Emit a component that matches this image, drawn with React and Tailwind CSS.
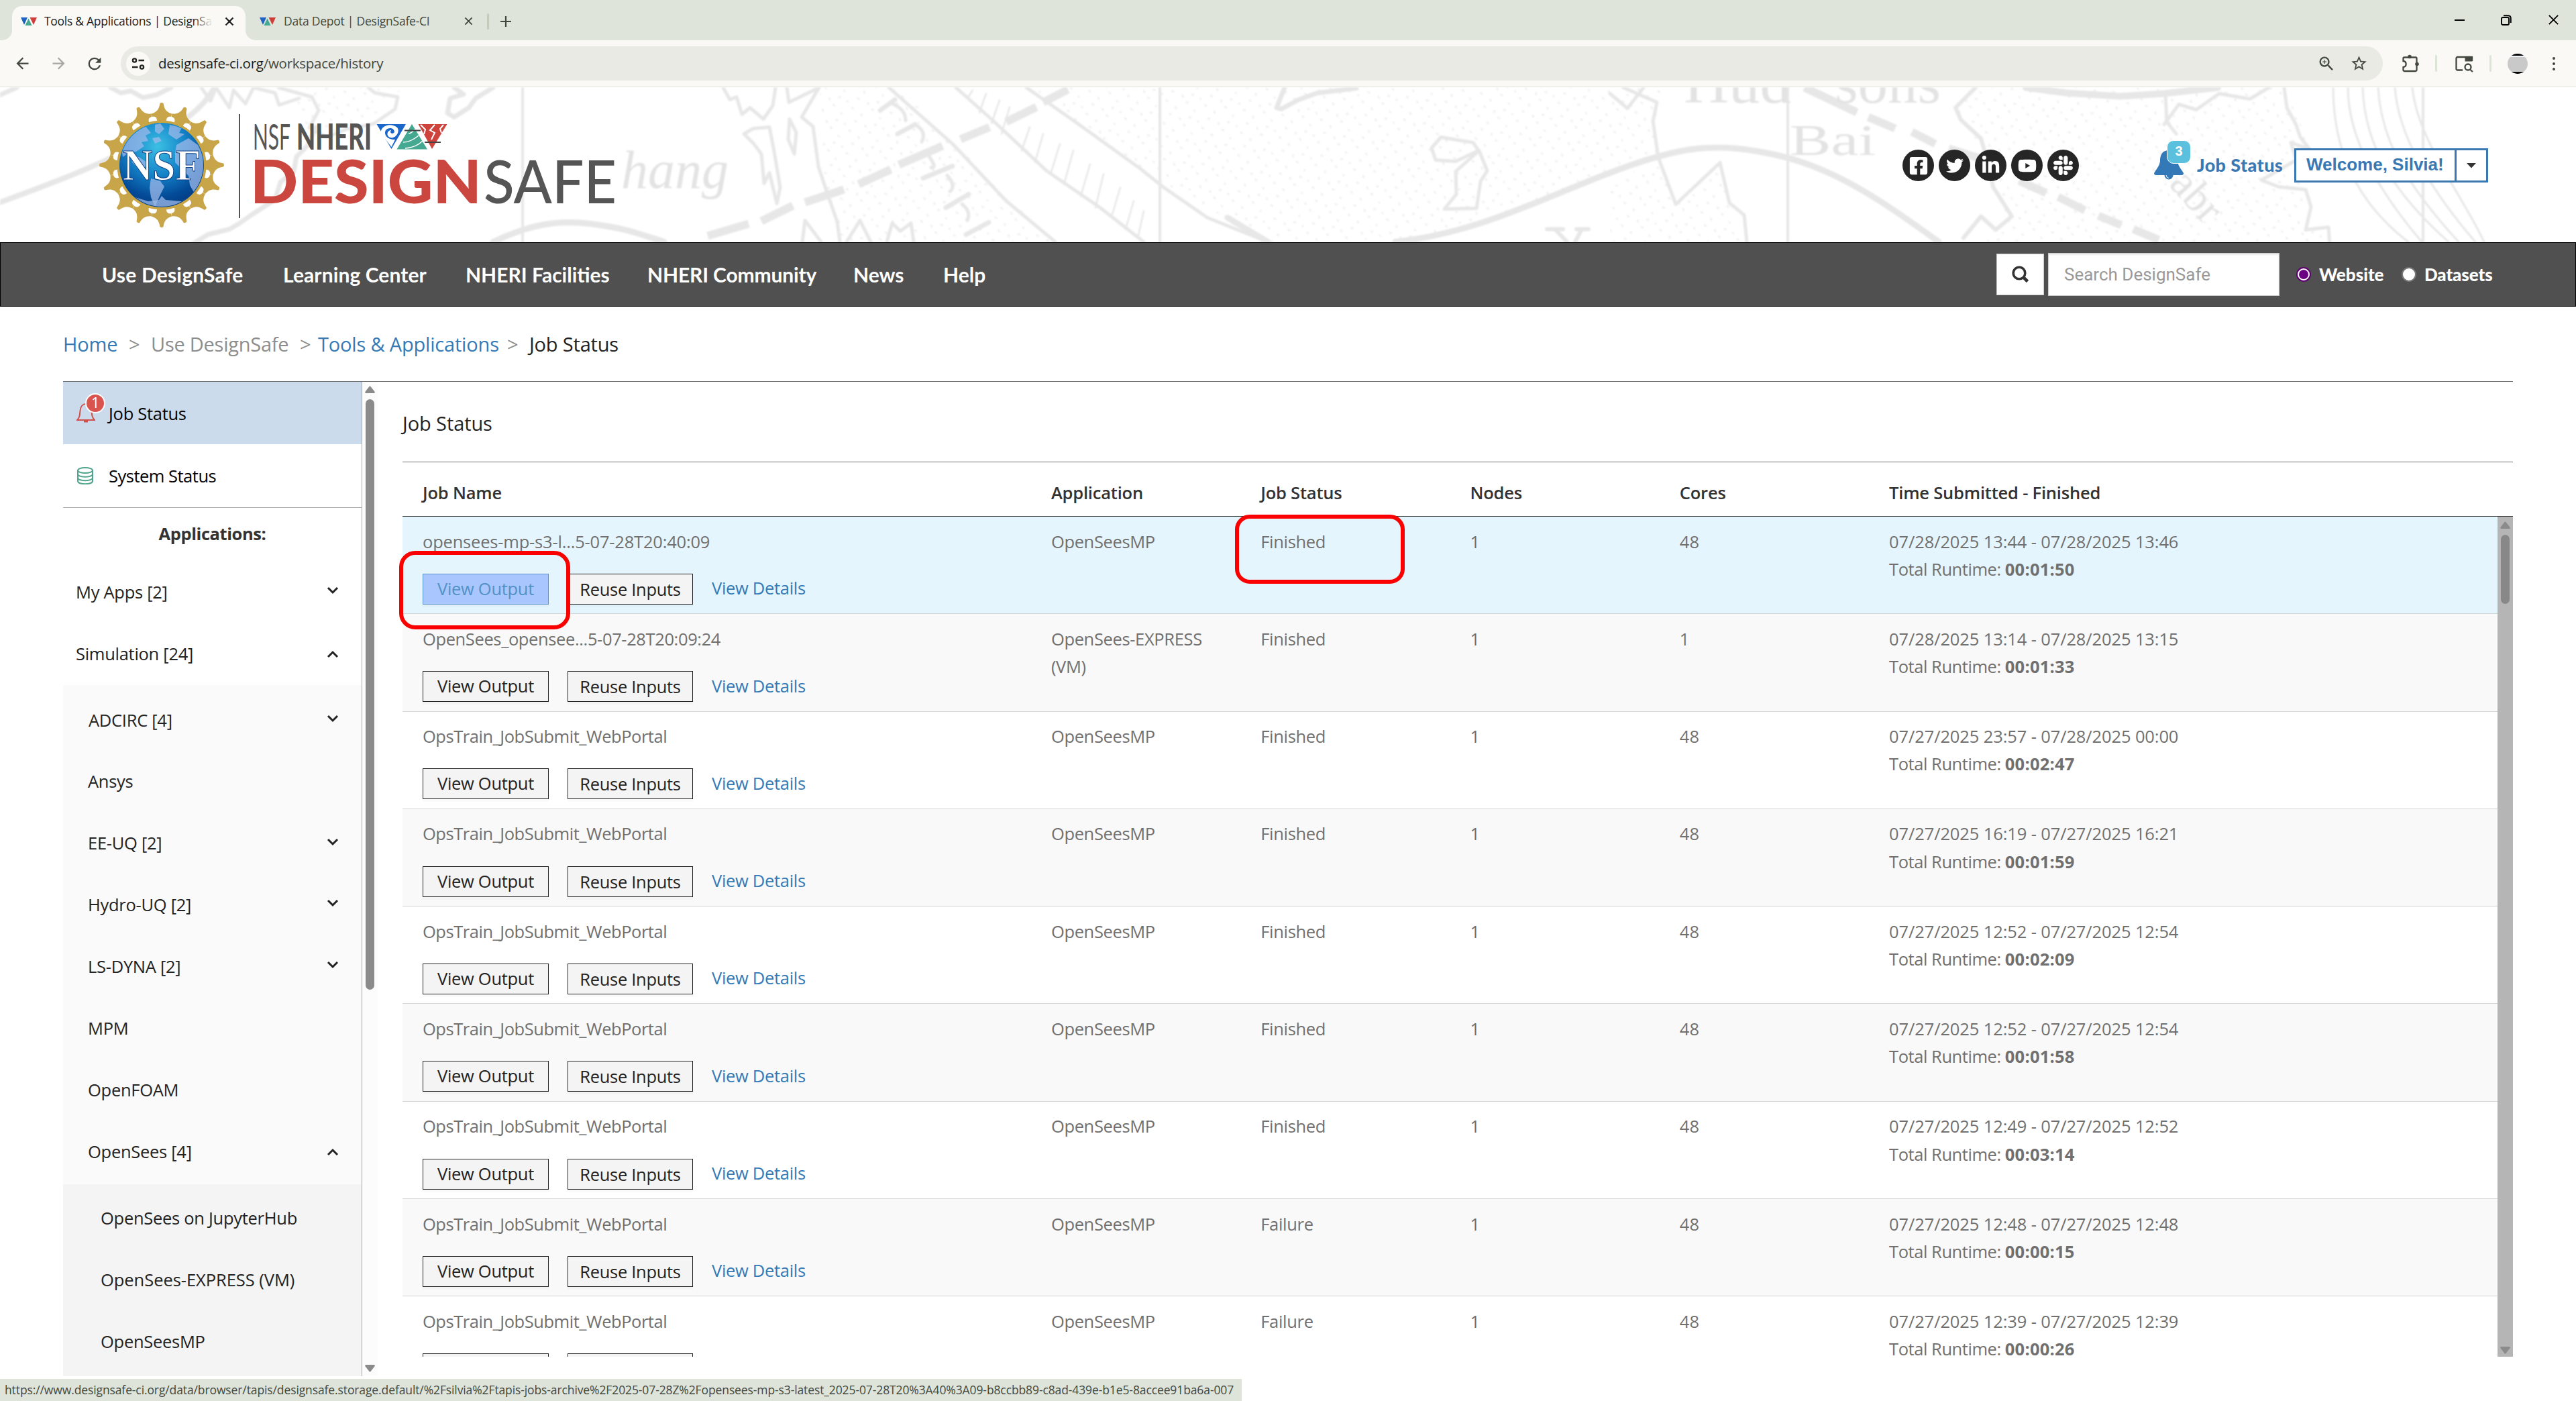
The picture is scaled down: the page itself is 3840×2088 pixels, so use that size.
import { FaFacebookSquare, FaTwitter, FaLinkedinIn, FaYoutube, FaSlack } from "react-icons/fa";
import { MdArrowBack, MdArrowForward, MdRefresh, MdStarBorder, MdZoomIn } from "react-icons/md";

const JOBS = [
  { name: "opensees-mp-s3-l...5-07-28T20:40:09", track: "tracking-[-0.2px]", app: "OpenSeesMP", status: "Finished", cores: "48", time: "07/28/2025 13:44 - 07/28/2025 13:46", run: "00:01:50", active: true },
  { name: "OpenSees_opensee...5-07-28T20:09:24", track: "tracking-[-0.38px]", app: "OpenSees-EXPRESS (VM)", status: "Finished", cores: "1", time: "07/28/2025 13:14 - 07/28/2025 13:15", run: "00:01:33" },
  { name: "OpsTrain_JobSubmit_WebPortal", app: "OpenSeesMP", status: "Finished", cores: "48", time: "07/27/2025 23:57 - 07/28/2025 00:00", run: "00:02:47" },
  { name: "OpsTrain_JobSubmit_WebPortal", app: "OpenSeesMP", status: "Finished", cores: "48", time: "07/27/2025 16:19 - 07/27/2025 16:21", run: "00:01:59" },
  { name: "OpsTrain_JobSubmit_WebPortal", app: "OpenSeesMP", status: "Finished", cores: "48", time: "07/27/2025 12:52 - 07/27/2025 12:54", run: "00:02:09" },
  { name: "OpsTrain_JobSubmit_WebPortal", app: "OpenSeesMP", status: "Finished", cores: "48", time: "07/27/2025 12:52 - 07/27/2025 12:54", run: "00:01:58" },
  { name: "OpsTrain_JobSubmit_WebPortal", app: "OpenSeesMP", status: "Finished", cores: "48", time: "07/27/2025 12:49 - 07/27/2025 12:52", run: "00:03:14" },
  { name: "OpsTrain_JobSubmit_WebPortal", app: "OpenSeesMP", status: "Failure", cores: "48", time: "07/27/2025 12:48 - 07/27/2025 12:48", run: "00:00:15" },
  { name: "OpsTrain_JobSubmit_WebPortal", app: "OpenSeesMP", status: "Failure", cores: "48", time: "07/27/2025 12:39 - 07/27/2025 12:39", run: "00:00:26" },
];

const COLUMNS = ["Job Name", "Application", "Job Status", "Nodes", "Cores", "Time Submitted - Finished"];
const NAV = [
  ["Use DesignSafe", "w-[270px] tracking-[0.2px]"],
  ["Learning Center", "w-[272px] tracking-[0.1px]"],
  ["NHERI Facilities", "w-[271px]"],
  ["NHERI Community", "w-[307px] tracking-[-0.15px]"],
  ["News", "w-[134px]"],
  ["Help", ""],
];

function Favicon() {
  return (
    <svg className="h-[12px] w-[24px] shrink-0" viewBox="0 0 24 12">
      <path d="M0 0h10L5 11z" fill="#1d62c4" />
      <path d="M11.5 1.5 16.5 12h-10z" fill="#45a891" />
      <path d="M13.5 0H24l-5 11z" fill="#cf3f3a" />
    </svg>
  );
}

function Cross({ className }) {
  return (
    <svg className={className} viewBox="0 0 14 14" fill="none" stroke="currentColor">
      <path d="M1.5 1.5 12.5 12.5M12.5 1.5 1.5 12.5" />
    </svg>
  );
}

function TabStrip() {
  return (
    <div className="flex h-[60px] items-start bg-[#dee4d9]">
      <div className="relative ml-[18px] mt-[9px] flex h-[51px] w-[348px] items-center rounded-t-[15px] bg-[#faf9f5] pb-[6px] pl-[13px]">
        <svg className="absolute -left-[15px] bottom-0 h-[15px] w-[15px]" viewBox="0 0 15 15">
          <path d="M15 0v15H0A15 15 0 0 0 15 0z" fill="#faf9f5" />
        </svg>
        <svg className="absolute -right-[15px] bottom-0 h-[15px] w-[15px]" viewBox="0 0 15 15">
          <path d="M0 0v15h15A15 15 0 0 1 0 0z" fill="#faf9f5" />
        </svg>
        <Favicon />
        <div className="relative ml-[11px] w-[251px] overflow-hidden whitespace-nowrap text-[17.5px] tracking-[-0.28px] text-[#1d1e1c]">
          Tools &amp; Applications | DesignSafe-CI
          <div className="absolute inset-y-0 right-0 w-[28px] bg-linear-to-r from-[#faf9f500] to-[#faf9f5]" />
        </div>
        <Cross className="ml-[18px] h-[14px] w-[14px] stroke-[2.2px] text-[#1d1e1c]" />
      </div>
      <div className="ml-[21px] mt-[9px] flex h-[45px] items-center">
        <Favicon />
        <div className="ml-[12px] w-[269px] whitespace-nowrap text-[17.5px] tracking-[-0.24px] text-[#43483f]">Data Depot | DesignSafe-CI</div>
        <Cross className="h-[13px] w-[13px] stroke-[2px] text-[#43483f]" />
        <div className="ml-[21px] h-[24px] w-[3px] rounded-full bg-[#c3ccbc]" />
        <svg className="ml-[17px] h-[16px] w-[16px]" viewBox="0 0 16 16" stroke="#43483f" strokeWidth="2.2">
          <path d="M8 0v16M0 8h16" />
        </svg>
      </div>
      <div className="ml-auto mr-[25px] mt-[22px] flex h-[15px] items-center gap-[54px] text-black">
        <div className="h-[2px] w-[15px] bg-black" />
        <svg className="h-[16px] w-[16px]" viewBox="0 0 16 16" fill="none" stroke="black" strokeWidth="1.9">
          <rect x="1" y="4" width="11" height="11" rx="2" />
          <path d="M4 1.2h7A4 4 0 0 1 14.8 5v7" />
        </svg>
        <Cross className="h-[17px] w-[17px] stroke-[1.5px]" />
      </div>
    </div>
  );
}

function Toolbar() {
  return (
    <div className="flex h-[70px] items-center border-b border-[#dfe1da] bg-[#faf9f5] text-[#43483f]">
      <MdArrowBack className="ml-[20px] h-[27px] w-[27px]" />
      <MdArrowForward className="ml-[27px] h-[27px] w-[27px] text-[#a6a8a1]" />
      <MdRefresh className="ml-[26px] h-[28px] w-[28px]" />
      <div className="ml-[25px] flex h-[51px] w-[3372px] items-center rounded-full bg-[#e9eae4] pl-[8px] pr-[22px]">
        <div className="flex h-[36px] w-[36px] items-center justify-center rounded-full bg-[#faf9f5]">
          <svg className="h-[18px] w-[20px]" viewBox="0 0 20 18" fill="none" stroke="#22241f" strokeWidth="2.3">
            <circle cx="4.5" cy="4" r="2.6" />
            <path d="M10.500 4H19M1 14H9.500" />
            <circle cx="15.500" cy="14" r="2.600" />
          </svg>
        </div>
        <div className="ml-[12px] whitespace-nowrap text-[20.5px] tracking-[-0.26px]">
          <span className="text-[#1b1c1a]">designsafe-ci.org</span>/workspace/history
        </div>
        <MdZoomIn className="ml-auto h-[28px] w-[28px]" />
        <MdStarBorder className="ml-[21px] h-[27px] w-[27px]" />
      </div>
      <svg className="ml-[28px] h-[28px] w-[28px]" viewBox="0 0 28 28">
        <path d="M4 4.500h17a1.500 1.500 0 0 1 1.500 1.500v17.500a1.500 1.500 0 0 1-1.500 1.500H4a1.500 1.500 0 0 1-1.500-1.500V19c5.500-.5 5.500-8.500 0-9V6A1.500 1.500 0 0 1 4 4.500z" fill="none" stroke="#43483f" strokeWidth="2.300" />
        <circle cx="12" cy="3.500" r="2.800" fill="#43483f" />
        <circle cx="23" cy="14.500" r="2.800" fill="#43483f" />
      </svg>
      <div className="ml-[22px] h-[25px] w-[3px] rounded-full bg-[#dbe5d5]" />
      <svg className="ml-[27px] h-[26px] w-[28px]" viewBox="0 0 28 26" fill="none" stroke="#43483f" strokeWidth="2.300">
        <path d="M11 22.500H3.500A2 2 0 0 1 1.500 20.500V5A2 2 0 0 1 3.500 3H25v6" />
        <path d="M14.500 2h9a2 2 0 0 1 2 2v5.500h-11z" fill="#43483f" stroke="none" />
        <circle cx="19" cy="18" r="4.500" />
        <path d="M22 21.500 26 25" />
      </svg>
      <div className="ml-[23px] h-[25px] w-[3px] rounded-full bg-[#dbe5d5]" />
      <div className="ml-[24px] flex h-[30px] w-[30px] flex-col overflow-hidden rounded-full bg-[#c9c9c9]">
        <div className="h-[3px] bg-black" />
        <div className="h-[2px] bg-[#f0f3fa]" />
        <div className="mt-auto h-[3px] bg-black" />
      </div>
      <div className="ml-[37px] flex flex-col gap-[4px]">
        <div className="h-[4px] w-[4px] rounded-full bg-[#43483f]" />
        <div className="h-[4px] w-[4px] rounded-full bg-[#43483f]" />
        <div className="h-[4px] w-[4px] rounded-full bg-[#43483f]" />
      </div>
    </div>
  );
}

function MapBackdrop() {
  return (
    <svg className="absolute inset-0 h-full w-full blur-[1px]" viewBox="0 131 3840 230" fill="none" stroke="#e7e7e7" strokeLinecap="round" strokeLinejoin="round">
      <defs>
        <pattern id="stipple" width="58" height="34" patternUnits="userSpaceOnUse" patternTransform="rotate(7)">
          <g stroke="#ececec" strokeWidth="2.400">
            <path d="M4 5l2 1M19 13l1 2M34 4l2 1M47 15l1 1M11 24l2 1M27 29l1 2M41 26l2 0M54 30l1 1" />
          </g>
        </pattern>
      </defs>
      <g fill="url(#stipple)" stroke="none">
        <path d="M430 131H600L560 180 500 200 450 190z" />
        <path d="M420 260 370 340 290 361H330L390 320z" />
        <path d="M1222 131H1340L1570 361H1255L1225 250z" />
        <path d="M1530 131H2480L2465 190 2475 235 2300 300 2150 355 1890 361 1730 270z" />
        <path d="M2400 361V270L2475 240 2500 305 2560 250 2600 361z" />
        <path d="M2945 131H3410L3440 215 3430 330 3480 361H2960L2990 320 2965 240 2915 165z" />
      </g>
      <g strokeWidth="5">
        <path d="M0 142 25 131M165 131l15 8 15-3 18 10 20-4 22-11" strokeWidth="7" />
        <path d="M0 302C60 280 100 265 134 250S190 225 230 205 300 165 320 131" strokeWidth="8" />
        <path d="M300 131l14 20 8-20 20 30 6-26 18 20 12-24 32 8 6 18 30-10M415 131l50 14 10 20-14 26 26 14 30-12 40-8 32-22 4-18-34-6-10-8" />
        <path d="M470 190l-10 26-18 18-4 22-20 16-8 26-34 22-20 14-14 8-32 8-26 16-14 18" strokeWidth="7" />
        <path d="M735 131l-26 16-10 14-22 14-10-6 4-22 20-6-14-10" strokeWidth="7" />
        <path d="M779 131V361M1729 131V361M2665 131V361M3612 131V361" strokeWidth="4" />
        <path d="M735 361C790 335 830 328 880 334S950 348 990 361" strokeWidth="9" />
        <path d="M1078 131l10 18 10-4 8 26 12-10 20 17 14-20 4-27M1173 131l3 22 45-22-26 44 17 14 8 60 12 36 16 46 4 30" />
        <path d="M1147 190l8 42 8 48-5 24-11-46-8 16-4-44-12-16-14-14 14-8z M1177 178l10 20-3 32-9-22z" />
        <path d="M1196 361l4-32 24 32M1262 361l20-32 16 32M1322 361l8-28 12 12 16-12 4 28" />
        <path d="M1325 131 1420 215 1500 300 1573 361M1425 131 1480 180 1560 255 1640 310 1705 361M1530 131 1600 180 1700 252 1735 280 1800 325 1890 361" />
        <path d="M1450 135l-8 12M1470 140l-10 28M1490 150l-12 34M1505 160l-12 40M1535 190l-12 35M1555 200l-12 42M1580 215l-14 45M1600 225l-14 50M1625 245l-14 48M1645 260l-12 50M1670 280l-12 40M1690 300l-12 42M1705 315l-8 36" strokeWidth="2.500" />
        <path d="M1312 165l22-16M1338 200l26-14M1376 266l44-18M1410 310l34-20M1440 350l34-18" strokeWidth="7" />
        <path d="M1332 156q18 8 18 24M1364 186q18 10 10 26M1384 232q14 20 4 18M1412 262q14 16 4 24M1434 305q14 10 8 24" />
        <path d="M1915 131l-12 30 7 2 26-14 28-10 58-7" strokeWidth="7" />
        <path d="M2148 205l48 8 8 12-34 16-30-2-6-18zM2205 225l12 30-10 16-6 40-48 1 18-22-1-34 18-16z" />
        <path d="M2080 361C2200 348 2290 300 2400 258S2560 212 2650 232 2820 310 2890 361M1830 325 1890 361" strokeWidth="9" />
        <path d="M2306 342h24M2318 342 2336 361M2348 361 2358 342M2350 342h18" strokeWidth="6" />
        <path d="M2400 140l26 22 24-31M2420 131l50 22-6 28 8 54 26 70 66-62 14 60 22 18 4 40" />
        <path d="M2945 131l-30 30 8 18 30 28 10 34 8 38 28 44-24 20-22-20-26 32" strokeWidth="6" />
        <path d="M3020 131l60 8 80 5 66-4 80-9" strokeWidth="10" />
        <path d="M3228 142l2 40 14 18M3226 186l22-30 26 8 34-24 46 8 28-17M3405 131l4 30 14 26 6 18 14 18-28-10 8 26-52 30 26 10 40 4 8 26-8 34 34-4 2 28 30 8" />
        <path d="M3478 131C3478 220 3510 300 3590 361M3500 131C3500 210 3550 290 3610 361M3522 131C3525 220 3570 290 3650 361M3545 131C3550 220 3600 290 3665 361M3570 131C3575 200 3620 280 3690 361M3596 131C3604 210 3670 290 3703 361" strokeWidth="3" />
      </g>
      <g strokeWidth="12" strokeLinecap="butt">
        <path d="M1055 352 1116 334M1135 330 1182 307M1200 302 1258 283M1280 275 1328 253M1340 246 1405 218M1432 208 1475 190M1500 182 1545 160M1555 153 1592 134" />
        <path d="M2690 131 2768 168M2785 175 2825 192M2850 197 2885 215M2905 222 2950 236M3010 270 3050 288M3068 294 3108 314M3128 322 3162 336M3180 342 3218 358" />
      </g>
      <g fill="#e3e3e3" stroke="none" fontFamily="Liberation Serif, serif">
        <text x="926" y="280" fontSize="80" fontStyle="italic" textLength="160" lengthAdjust="spacingAndGlyphs">hang</text>
        <text x="2510" y="153" fontSize="84" textLength="160" lengthAdjust="spacingAndGlyphs">Hud</text>
        <text x="2735" y="153" fontSize="84" textLength="158" lengthAdjust="spacingAndGlyphs">sons</text>
        <text x="2668" y="231" fontSize="66" textLength="128" lengthAdjust="spacingAndGlyphs">Bai</text>
        <text x="3232" y="276" fontSize="64" transform="rotate(48 3232 276)">abr</text>
      </g>
    </svg>
  );
}

const SPIKES = Array.from({ length: 16 }, (_, i) => i * 22.5);

function NsfSeal() {
  return (
    <svg className="h-[186px] w-[186px]" viewBox="-93 -93 186 186">
      <defs>
        <radialGradient id="globe" cx="0.45" cy="0.28" r="0.75">
          <stop offset="0" stopColor="#3cc0e4" />
          <stop offset="0.45" stopColor="#1583c8" />
          <stop offset="0.8" stopColor="#034a97" />
          <stop offset="1" stopColor="#033a80" />
        </radialGradient>
        <clipPath id="disc"><circle r="62" /></clipPath>
      </defs>
      <g fill="#c8a548">
        {SPIKES.map((a) => (
          <path key={a} transform={`rotate(${a})`} d="M-2.500-92Q0-94 2.500-92C4-83 7-79 15.200-76.500L11-60H-11L-15.200-76.500C-7-79-4-83-2.500-92z" />
        ))}
      </g>
      <g fill="#ffffff">
        {SPIKES.map((a) => (
          <path key={a} transform={`rotate(${a + 11.25})`} d="M-4-72.500Q0-74.500 4-72.500Q7-71 6-64H-6Q-7-71-4-72.500z" />
        ))}
      </g>
      <circle r="64.500" fill="none" stroke="#c9a544" strokeWidth="4" />
      <circle r="63" fill="url(#globe)" />
      <g clipPath="url(#disc)" fill="#9db9ea" fillOpacity="0.75">
        <path d="M-52-36-38-52-24-58-16-48-24-44-20-36-30-34-26-28-38-20-50-18-58-12-60-24zM-10-60-2-62 4-54-4-46-10-50zM-14-40-4-42 0-36-10-32zM12-60 30-56 26-48 34-46 22-38 10-46z" />
        <path d="M22-30 40-40 54-30 62-14 62 40 50 44 42 30 40 16 30 6 20-4 20-18zM-46-16-34-12-22-4-26 6-36 4-44-4zM-16 20-2 24 4 32-2 44-10 62-16 48-18 34z" />
        <path d="M-40 48-20 54-4 52 0 46 6 52 30 54 44 46 30 64H-30z" />
      </g>
      <text x="-58" y="22" textLength="116" lengthAdjust="spacingAndGlyphs" fontFamily="Liberation Serif, serif" fontWeight="700" fontSize="66" fill="#ffffff" stroke="#0c3f86" strokeWidth="1">NSF</text>
    </svg>
  );
}

function Wordmark() {
  return (
    <svg className="h-[156px] w-[560px]" viewBox="370 170 560 156" fontFamily="Lato, sans-serif" fill="#555555">
      <text x="377" y="223" fontSize="53" fontWeight="400" textLength="56" lengthAdjust="spacingAndGlyphs">NSF</text>
      <text x="442" y="223" fontSize="53" fontWeight="900" textLength="112" lengthAdjust="spacingAndGlyphs">NHERI</text>
      <text x="373" y="302.500" fontSize="89" fontWeight="900" fill="#ca463f" textLength="345" lengthAdjust="spacingAndGlyphs">DESIGN</text>
      <text x="721" y="302.500" fontSize="89" fontWeight="500" textLength="198" lengthAdjust="spacingAndGlyphs">SAFE</text>
      <path d="M561.500 185H605L583.500 222z" fill="#1b66cb" />
      <path d="M568 199C566 188 582 182 592 190C597 196 590 207 582 205C575 203 577 194 583 194C580 198 585 201 588 197C588 190 579 189 575 194C572 200 576 208 589 208L583.500 219z" fill="#ffffff" />
      <path d="M614 185 637 222.500H591.500z" fill="#45a891" />
      <path d="M601 212Q612 212 624 202M604 221Q620 220 630 210M609 199Q613 199 618 193" stroke="#ffffff" strokeWidth="1.500" fill="none" />
      <path d="M623.500 185H666.500L644 222z" fill="#cf433d" />
      <path d="M627 186 634 193 632 200M661 186 656 192 658 198M648 186 641 194 648 198 643 208" stroke="#ffffff" strokeWidth="2" fill="none" />
      <path d="M603 194.500H627M633 212H657" stroke="#444444" strokeWidth="2" />
    </svg>
  );
}

function Social({ children }) {
  return <div className="flex h-[47px] w-[47px] items-center justify-center rounded-full bg-[#262626] text-white">{children}</div>;
}

function Banner() {
  return (
    <header className="relative h-[231px] overflow-hidden bg-white">
      <MapBackdrop />
      <div className="relative flex h-full items-center">
        <div className="ml-[148px]"><NsfSeal /></div>
        <div className="ml-[22px] mt-[3px] h-[155px] w-[2px] bg-[#555555]" />
        <div className="ml-[12px] mt-[5px]"><Wordmark /></div>
        <div className="ml-auto mt-[2px] flex gap-[7px]">
          <Social><FaFacebookSquare className="h-[30px] w-[30px]" /></Social>
          <Social><FaTwitter className="h-[26px] w-[26px]" /></Social>
          <Social><FaLinkedinIn className="h-[29px] w-[29px]" /></Social>
          <Social><FaYoutube className="h-[28px] w-[28px]" /></Social>
          <Social><FaSlack className="h-[33px] w-[33px]" /></Social>
        </div>
        <div className="relative ml-[112px]">
          <svg className="h-[44px] w-[44px]" viewBox="0 0 44 44">
            <path d="M22 0C11 0 9 9 9 16 8 24 4 27 0 34 0 36 1 37 3 37H41C43 37 44 36 44 34 40 27 36 24 35 16 35 9 33 0 22 0z" fill="#3379b7" />
            <circle cx="22" cy="37" r="6.500" fill="#3379b7" />
            <path d="M18 37Q18.500 41 22 41.500" stroke="#ffffff" strokeWidth="1" fill="none" />
          </svg>
          <div className="absolute -top-[15px] left-[19px] flex h-[35px] w-[36px] items-center justify-center rounded-[10px] border border-white bg-[#5bc0de] pb-[3px] font-['Liberation_Sans',sans-serif] text-[20px] font-bold text-white">3</div>
        </div>
        <div className="ml-[20px] w-[145px] whitespace-nowrap font-['Lato',sans-serif] text-[27px] font-black leading-none tracking-[0.4px] text-[#3a78b3]">Job Status</div>
        <div className="mr-[131px] mt-[2px] flex h-[51px] w-[289px] border-[3px] border-[#3a78b3] bg-white font-['Liberation_Sans',sans-serif]">
          <div className="flex flex-1 items-center whitespace-nowrap pl-[15px] pb-[3px] text-[26px] font-bold text-[#3a78b3]">Welcome, Silvia!</div>
          <div className="flex w-[47px] items-center justify-center border-l-[3px] border-[#3a78b3]">
            <svg className="h-[8px] w-[14px]" viewBox="0 0 14 8"><path d="M0 0h14L7 7.500z" fill="#333333" /></svg>
          </div>
        </div>
      </div>
    </header>
  );
}

function NavBar() {
  return (
    <nav className="flex h-[96px] items-center border border-black bg-[#505050] pl-[151px] pr-[122px] font-['Lato',sans-serif] font-bold text-white">
      <div className="flex text-[30px]">
        {NAV.map(([label, size]) => <span key={label} className={`whitespace-nowrap ${size}`}>{label}</span>)}
      </div>
      <div className="ml-auto flex items-center">
        <div className="flex h-[62px] w-[71px] items-center justify-center border border-[#cccccc] bg-white">
          <svg className="h-[26px] w-[26px]" viewBox="0 0 26 26" fill="none" stroke="#333333">
            <circle cx="11" cy="11" r="8.800" strokeWidth="3.600" />
            <path d="M17 17 23.500 23.500" strokeWidth="4.600" />
          </svg>
        </div>
        <div className="ml-[6px] flex h-[64px] w-[345px] items-center border border-[#cccccc] bg-white pl-[23px] font-['Roboto',sans-serif] text-[26px] font-normal text-[#999999] shadow-[inset_0_2px_2px_rgba(0,0,0,0.08)]">Search DesignSafe</div>
        <div className="ml-[25px] flex h-[22px] w-[22px] items-center justify-center rounded-full border-[2px] border-[#5d0070] bg-white"><div className="h-[14px] w-[14px] rounded-full bg-[#6a0082]" /></div>
        <div className="ml-[12px] w-[123px] text-[26px] font-black">Website</div>
        <div className="h-[22px] w-[22px] rounded-full border-[2px] border-[#767676] bg-white" />
        <div className="ml-[12px] w-[103px] whitespace-nowrap text-[26px] font-black tracking-[-0.1px]">Datasets</div>
      </div>
    </nav>
  );
}

function Chevron({ up }) {
  return (
    <svg className={up ? "h-[12px] w-[18px]" : "-mt-[6px] h-[12px] w-[18px]"} viewBox="0 0 18 12" fill="none" stroke="#222222" strokeWidth="3">
      <path d={up ? "M2 10 9 3 16 10" : "M2 2 9 9 16 2"} />
    </svg>
  );
}

function MenuItem({ label, indent, chevron }) {
  return (
    <div className={`flex h-[91.9px] items-center justify-between pr-[34px] ${indent}`}>
      <span className="-mt-[2px] whitespace-nowrap">{label}</span>
      {chevron && <Chevron up={chevron === "up"} />}
    </div>
  );
}

function Sidebar() {
  return (
    <aside className="h-[1482px] w-[446px] overflow-hidden border-r border-[#a8a8a8] text-[25.5px] tracking-[-0.28px] text-[#222222]">
      <div className="flex h-[93px] items-center bg-[#cbdbeb] pl-[20px] text-black">
        <div className="relative w-[48px]">
          <svg className="mt-[-2px] h-[30px] w-[28px]" viewBox="0 0 28 30" fill="none" stroke="#d0504c" strokeWidth="2">
            <path d="M1 26C5 22 5 18 5.500 12 6 5 10 2 14 2S22 5 22.500 12C23 18 23 22 27 26z" />
            <path d="M11 28h6" strokeWidth="3" />
          </svg>
          <div className="absolute -top-[16px] left-[13px] flex h-[30px] w-[30px] items-center justify-center rounded-full border-[2px] border-white bg-[#d9534f] text-[21px] leading-none text-white">1</div>
        </div>
        <span className="pt-[2px]">Job Status</span>
      </div>
      <div className="flex h-[95px] items-center border-b border-[#a8a8a8] pl-[20px] text-black">
        <svg className="h-[26px] w-[48px]" viewBox="0 0 48 26" fill="none" stroke="#4fa48b" strokeWidth="2">
          <ellipse cx="13" cy="5" rx="11" ry="4" />
          <path d="M2 5V21C2 26.500 24 26.500 24 21V5M2 10.500C2 16 24 16 24 10.500M2 16C2 21.500 24 21.500 24 16" />
        </svg>
        <span className="tracking-[-0.5px]">System Status</span>
      </div>
      <div className="flex h-[80px] items-center justify-center pb-[4px] text-[25.5px] font-bold tracking-[-0.41px] text-[#333333]">Applications:</div>
      <MenuItem label="My Apps [2]" indent="pl-[19px]" chevron="down" />
      <MenuItem label="Simulation [24]" indent="pl-[19px]" chevron="up" />
      <div className="bg-[#fafafa] pt-[7px]">
        <MenuItem label="ADCIRC [4]" indent="pl-[38px]" chevron="down" />
        <MenuItem label="Ansys" indent="pl-[37px]" />
        <MenuItem label="EE-UQ [2]" indent="pl-[37px]" chevron="down" />
        <MenuItem label="Hydro-UQ [2]" indent="pl-[37px]" chevron="down" />
        <MenuItem label="LS-DYNA [2]" indent="pl-[37px]" chevron="down" />
        <MenuItem label="MPM" indent="pl-[37px]" />
        <MenuItem label="OpenFOAM" indent="pl-[37px]" />
        <MenuItem label="OpenSees [4]" indent="pl-[37px]" chevron="up" />
        <div className="mt-[2px] bg-[#f4f4f4] pb-[20px] pt-[5px]">
          <MenuItem label="OpenSees on JupyterHub" indent="pl-[56px]" />
          <MenuItem label="OpenSees-EXPRESS (VM)" indent="pl-[56px] tracking-[-0.05px]" />
          <MenuItem label="OpenSeesMP" indent="pl-[56px]" />
        </div>
      </div>
    </aside>
  );
}

function Arrow({ down }) {
  return (
    <svg className="h-[11px] w-[15px] shrink-0" viewBox="0 0 15 11">
      <path d={down ? "M1.500 0h12a1.500 1.500 0 0 1 1.200 2L8.500 10Q7.500 11 6.500 10L.3 2A1.500 1.500 0 0 1 1.500 0z" : "M1.500 11h12a1.500 1.500 0 0 0 1.200-2L8.500 1Q7.500 0 6.500 1L.3 9A1.500 1.500 0 0 0 1.500 11z"} fill="#8b8b8b" />
    </svg>
  );
}

function JobRow({ job, index }) {
  const tone = job.active ? "bg-[#e5f5fd]" : index % 2 ? "bg-[#f9f9f9]" : "bg-white";
  const output = job.active ? "border-[#5b93c9] bg-[#a9c6ff] text-[#5292c6]" : "border-[#222222] bg-[#f4f4f4] text-[#222222]";
  return (
    <div className={`grid h-[145.3px] grid-cols-[3fr_1fr_1fr_1fr_1fr_3fr] border-b border-[#d2d5d6] pt-[16.5px] leading-[41.25px] text-[#707070] ${tone}`}>
      <div className="pl-[30px]">
        <div className={job.track ?? "tracking-[-0.46px]"}>{job.name}</div>
        <div className="mt-[27px] flex items-center whitespace-nowrap leading-[43px] tracking-[-0.3px]">
          <div className={`h-[46px] w-[188px] border text-center shadow-[0_4px_0_rgba(0,0,0,0.02)] ${output}`}>View Output</div>
          <div className="ml-[28px] h-[46px] w-[187px] border border-[#222222] bg-[#f4f4f4] pt-px text-center text-[#222222] shadow-[0_4px_0_rgba(0,0,0,0.02)]">Reuse Inputs</div>
          <div className="ml-[28px] pb-[2px] tracking-[-0.3px] text-[#337ab7]">View Details</div>
        </div>
      </div>
      <div className="pl-[30px] pr-[20px] tracking-[-0.35px]">{job.app}</div>
      <div className="pl-[30px] tracking-[-0.3px]">{job.status}</div>
      <div className="pl-[30px]">1</div>
      <div className="pl-[30px]">{job.cores}</div>
      <div className="whitespace-nowrap pl-[30px]">
        <div className="tracking-[-0.12px]">{job.time}</div>
        <div className="tracking-[-0.45px]">Total Runtime: <span className="font-bold tracking-[0.2px]">{job.run}</span></div>
      </div>
    </div>
  );
}

function JobTable() {
  return (
    <section className="relative ml-[37px] w-[3146px] text-[25.5px]">
      <h1 className="flex h-[119px] items-center pt-[4px] text-[29px] tracking-[-0.1px] text-[#222222]">Job Status</h1>
      <div className="h-px bg-[#707070]" />
      <div className="grid h-[81px] grid-cols-[3fr_1fr_1fr_1fr_1fr_3fr] items-center border-b border-[#333333] pr-[23px] pt-[11px] font-semibold tracking-[-0.2px] text-[#333333]">
        {COLUMNS.map((c) => <div key={c} className="whitespace-nowrap pl-[30px]">{c}</div>)}
      </div>
      <div className="flex h-[1252px]">
        <div className="w-[3123px] overflow-hidden">
          {JOBS.map((j, i) => <JobRow key={i} job={j} index={i} />)}
        </div>
        <div className="flex w-[23px] flex-col items-center bg-[#b5b5b5] pb-[4px] pt-[7px]">
          <Arrow />
          <div className="mt-[9px] h-[103px] w-[13px] rounded-full bg-[#888888]" />
          <div className="mt-auto"><Arrow down /></div>
        </div>
      </div>
      <div className="absolute -left-[5px] top-[252px] h-[117px] w-[255px] rounded-[24px] border-[6px] border-[#fb0000]" />
      <div className="absolute left-[1241px] top-[198px] h-[103px] w-[253px] rounded-[22px] border-[6px] border-[#fb0000]" />
    </section>
  );
}

export default function App() {
  return (
    <div className="flex h-[2088px] w-[3840px] flex-col overflow-hidden bg-white font-['Open_Sans',sans-serif] leading-normal">
      <TabStrip />
      <Toolbar />
      <Banner />
      <NavBar />
      <div className="flex h-[111px] items-center whitespace-pre pl-[94px] text-[29px] tracking-[-0.18px] text-[#8d8d8d]">
        <span className="w-[98px] text-[#337ab7]">Home</span>
        <span className="w-[33px]">&gt;</span>
        <span className="w-[222px] tracking-[-0.25px]">Use DesignSafe</span>
        <span className="w-[27px]">&gt;</span>
        <span className="w-[282px] text-[#337ab7]">Tools &amp; Applications</span>
        <span className="w-[33px]">&gt;</span>
        <span className="text-[#222222]">Job Status</span>
      </div>
      <main className="ml-[94px] flex h-[1483px] w-[3652px] border-t border-[#6b6b6b]">
        <Sidebar />
        <div className="flex w-[23px] flex-col items-center bg-[#fcfcfc] pb-[6px] pt-[6px]">
          <Arrow />
          <div className="mt-[9px] h-[880px] w-[13px] rounded-full bg-[#8b8b8b]" />
          <div className="mt-auto"><Arrow down /></div>
        </div>
        <JobTable />
      </main>
      <div className="mt-auto flex h-[33px] w-[1851px] items-center whitespace-nowrap bg-[#dee4d9] pl-[7px] text-[17.5px] tracking-[-0.11px] text-[#43483f]">
        https://www.designsafe-ci.org/data/browser/tapis/designsafe.storage.default/%2Fsilvia%2Ftapis-jobs-archive%2F2025-07-28Z%2Fopensees-mp-s3-latest_2025-07-28T20%3A40%3A09-b8ccbb89-c8ad-439e-b1e5-8accee91ba6a-007
      </div>
    </div>
  );
}
